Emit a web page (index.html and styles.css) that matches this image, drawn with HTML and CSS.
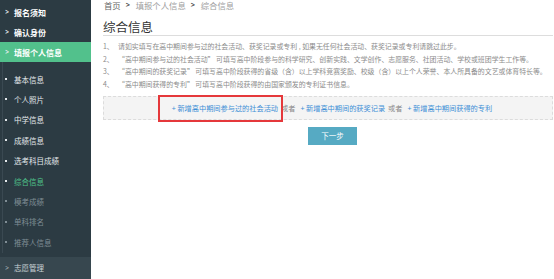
FILE: index.html
```html
<!DOCTYPE html>
<html lang="zh-CN">
<head>
<meta charset="utf-8">
<title>综合信息</title>
<link rel="stylesheet" href="styles.css">
</head>
<body>
<div class="app">
  <aside class="sidebar">
    <ul class="nav">
      <li class="nav-top"><span class="chev">&gt;</span>报名须知</li>
      <li class="nav-top"><span class="chev">&gt;</span>确认身份</li>
      <li class="nav-top active"><span class="chev">&gt;</span>填报个人信息</li>
    </ul>
    <ul class="sub">
      <li class="sub-item">基本信息</li>
      <li class="sub-item">个人照片</li>
      <li class="sub-item">中学信息</li>
      <li class="sub-item">成绩信息</li>
      <li class="sub-item">选考科目成绩</li>
      <li class="sub-item current">综合信息</li>
      <li class="sub-item dim">模考成绩</li>
      <li class="sub-item dim">单科排名</li>
      <li class="sub-item dim">推荐人信息</li>
    </ul>
    <div class="nav-top last"><span class="chev">&gt;</span>志愿管理</div>
  </aside>
  <main class="main">
    <div class="crumbs"><span class="home">首页</span><span class="sep">&gt;</span><span>填报个人信息</span><span class="sep">&gt;</span><span>综合信息</span></div>
    <h1 class="title">综合信息</h1>
    <ol class="notes">
      <li><span class="num">1、</span><span>请如实填写在高中期间参与过的社会活动、获奖记录或专利 , 如果无任何社会活动、获奖记录或专利请跳过此步。</span></li>
      <li><span class="num">2、</span><span>“高中期间参与过的社会活动” 可填写高中阶段参与的科学研究、创新实践、文学创作、志愿服务、社团活动、学校或班团学生工作等。</span></li>
      <li><span class="num">3、</span><span>“高中期间的获奖记录” 可填写高中阶段获得的省级（含）以上学科竞赛奖励、校级（含）以上个人荣誉、本人所具备的文艺或体育特长等。</span></li>
      <li><span class="num">4、</span><span>“高中期间获得的专利” 可填写高中阶段获得的由国家颁发的专利证书信息。</span></li>
    </ol>
    <div class="addbox">
      <span class="mark"><a class="add">+ 新增高中期间参与过的社会活动</a></span>
      <span class="or">或者</span>
      <a class="add">+ 新增高中期间的获奖记录</a>
      <span class="or">或者</span>
      <a class="add">+ 新增高中期间获得的专利</a>
    </div>
    <div class="actions"><button class="next">下一步</button></div>
  </main>
</div>
</body>
</html>
```
FILE: styles.css
```css
* { box-sizing: border-box; }
html, body { margin: 0; padding: 0; }
body {
  font-family: "Noto Sans CJK SC", "Noto Sans", sans-serif;
  background: #fff;
  width: 554px;
  height: 279px;
  overflow: hidden;
}
.app { display: flex; height: 279px; }

.sidebar {
  width: 91px;
  flex: none;
  background: #2c3b43;
  display: flex;
  flex-direction: column;
  padding-top: 2px;
}
.nav, .sub { list-style: none; margin: 0; padding: 0; }
.nav-top {
  height: 20px;
  display: flex;
  align-items: center;
  color: #fff;
  font-size: 8px;
  font-weight: bold;
  padding-left: 5px;
}
.chev {
  display: inline-block;
  width: 9px;
  font-family: "DejaVu Sans", sans-serif;
  font-weight: bold;
  font-size: 7px;
  color: #e8eef0;
  transform: scaleX(0.7);
  transform-origin: left center;
}
.nav-top.active { background: #52c18c; }
.sub {
  padding-top: 7px;
  position: relative;
}
.sub::before {
  content: "";
  position: absolute;
  left: 2px;
  top: 0;
  bottom: 0;
  width: 1px;
  background: #3a4952;
}
.sub-item {
  height: 20.4px;
  display: flex;
  align-items: center;
  padding-left: 14px;
  font-size: 7.5px;
  color: #e3e8eb;
  position: relative;
}
.sub-item::before {
  content: "";
  position: absolute;
  left: 5px;
  top: 9px;
  width: 2px;
  height: 2px;
  background: #e3e8eb;
}
.sub-item.current { color: #4fc28b; }
.sub-item.dim { color: #7f8d95; }
.sub-item.dim::before { background: #7f8d95; }
.nav-top.last {
  margin-top: 4px;
  height: 24px;
  background: #37474f;
  color: #c9d2d6;
  font-weight: normal;
  font-size: 7.5px;
}
.nav-top.last .chev { color: #aeb9be; font-weight: normal; }

.main {
  flex: 1;
  padding: 0 1px 0 12px;
  color: #888;
}
.crumbs {
  height: 11px;
  line-height: 11px;
  font-size: 8.4px;
  color: #a0a0a0;
  display: flex;
  padding-left: 1px;
}
.crumbs .home { color: #666; }
.crumbs .sep {
  font-family: "DejaVu Sans", sans-serif;
  font-weight: bold;
  color: #444;
  font-size: 7px;
  margin: 0 5px 0 4px;
  transform: scaleX(0.8);
}
.title {
  margin: 9px 0 0 0;
  font-size: 12.5px;
  line-height: 14px;
  font-weight: normal;
  color: #333;
  padding-bottom: 1px;
  border-bottom: 1px solid #ddd;
}
.notes {
  list-style: none;
  margin: 4px 0 0 0;
  padding: 0;
  font-size: 6.9px;
  line-height: 12.7px;
  color: #8c8c8c;
}
.notes li { display: flex; white-space: nowrap; }
.notes .num { width: 15px; flex: none; }

.addbox {
  margin-top: 5px;
  height: 24px;
  background: #f4f4f4;
  border: 1px dashed #dcdcdc;
  display: flex;
  align-items: center;
  justify-content: center;
  padding-left: 8px;
  font-size: 7.2px;
  white-space: nowrap;
  position: relative;
}
.add { color: #3d8fd6; }
.or { color: #888; margin: 0 5px 0 3px; }
.mark {
  position: relative;
}
.mark::after {
  content: "";
  position: absolute;
  left: -14px;
  right: -5px;
  top: -8px;
  bottom: -9px;
  border: 2px solid #e5383b;
}
.actions {
  display: flex;
  justify-content: center;
  padding-left: 9px;
  margin-top: 7px;
}
.next {
  width: 49px;
  height: 18px;
  border: 0;
  background: #56aac3;
  color: #fff;
  font-family: "Noto Sans CJK SC", sans-serif;
  font-size: 7.5px;
  padding: 0;
}
```
